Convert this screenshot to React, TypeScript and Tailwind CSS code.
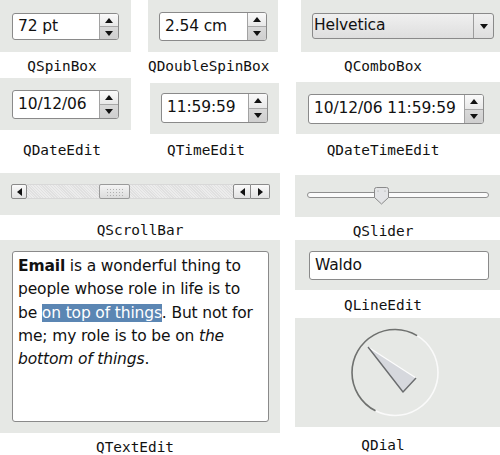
const label = "font-['DejaVu_Sans_Mono',monospace] text-[14.4px] leading-[16px] text-[#111] text-center";
const sans = "font-['DejaVu_Sans',sans-serif] text-[15.5px] tracking-[-0.15px] text-[#111]";
const panel = "bg-[#e6e8e5]";

function SpinButtons() {
  return (
    <div className="flex w-[19px] flex-col border-l border-[#a2a2a2]">
      <div className="flex flex-1 items-center justify-center border-b border-[#a8a8a8] bg-gradient-to-b from-[#fafafa] to-[#e8e8e8]">
        <svg width="8" height="5" viewBox="0 0 8 5">
          <path d="M0 5 L4 0 L8 5 Z" fill="#111" />
        </svg>
      </div>
      <div className="flex flex-1 items-center justify-center bg-gradient-to-b from-[#d9d9d9] to-[#cfcfcf]">
        <svg width="8" height="5" viewBox="0 0 8 5">
          <path d="M0 0 L8 0 L4 5 Z" fill="#111" />
        </svg>
      </div>
    </div>
  );
}

function SpinBox({ text, className }: { text: string; className: string }) {
  return (
    <div className={`flex overflow-hidden rounded-[3px] border border-[#8a8a8a] bg-white ${className}`}>
      <div className={`flex flex-1 items-center pl-[5px] ${sans}`}>{text}</div>
      <SpinButtons />
    </div>
  );
}

function ScrollBar() {
  return (
    <div className="flex h-[15px] w-[259px] items-stretch">
      <div className="flex w-[16px] items-center justify-center rounded-[2px] border border-[#8a8a8a] bg-gradient-to-b from-[#fafafa] to-[#e2e2e2]">
        <svg width="5" height="8" viewBox="0 0 5 8">
          <path d="M5 0 L0 4 L5 8 Z" fill="#111" />
        </svg>
      </div>
      <div className="relative flex-1 border-y border-[#d8d8d8] bg-[repeating-linear-gradient(45deg,#ececec_0px,#ececec_1px,#e0e0e0_1px,#e0e0e0_2px)]">
        <div className="absolute left-[72px] top-[-1px] flex h-[15px] w-[31px] items-center justify-center rounded-[2px] border border-[#9a9a9a] bg-gradient-to-b from-[#f4f4f4] to-[#dcdcdc]">
          <div className="h-[8px] w-[17px] bg-[radial-gradient(#b0b0b0_0.6px,transparent_0.8px)] bg-[length:3px_3px]" />
        </div>
      </div>
      <div className="flex w-[18px] items-center justify-center rounded-l-[2px] border border-[#8a8a8a] bg-gradient-to-b from-[#fafafa] to-[#e2e2e2]">
        <svg width="5" height="8" viewBox="0 0 5 8">
          <path d="M5 0 L0 4 L5 8 Z" fill="#111" />
        </svg>
      </div>
      <div className="flex w-[19px] items-center justify-center rounded-r-[2px] border border-l-0 border-[#8a8a8a] bg-gradient-to-b from-[#fafafa] to-[#e2e2e2]">
        <svg width="5" height="8" viewBox="0 0 5 8">
          <path d="M0 0 L5 4 L0 8 Z" fill="#111" />
        </svg>
      </div>
    </div>
  );
}

function Slider() {
  return (
    <svg width="185" height="20" viewBox="0 0 185 20">
      <rect x="0.5" y="6.5" width="181" height="5" rx="2.5" fill="#fbfbfb" stroke="#8e8e8e" />
      <path
        d="M67.5 3.5 Q67.5 1.5 69.5 1.5 L79.5 1.5 Q81.5 1.5 81.5 3.5 L81.5 11.5 L74.5 18 L67.5 11.5 Z"
        fill="#e3e4e6"
        stroke="#8a8a8a"
      />
      <circle cx="71" cy="5" r="0.6" fill="#999" />
      <circle cx="78" cy="5" r="0.6" fill="#999" />
    </svg>
  );
}

function Dial() {
  return (
    <svg width="205" height="109" viewBox="0 0 205 109">
      {/* light part of the ring: bottom and right */}
      <path d="M80.5 92.8 A43 43 0 0 0 143 54.5 A43 43 0 0 0 122.1 17.6" fill="none" stroke="#fafafa" strokeWidth="1.6" />
      {/* dark part: top and left */}
      <path d="M122.1 17.6 A43 43 0 0 0 57 54.5 A43 43 0 0 0 80.5 92.8" fill="none" stroke="#6f716f" strokeWidth="1.6" />
      <path d="M73 29 L121 60 L108 74 Z" fill="#d6d8dd" />
      <path d="M73 29 L121 60" stroke="#fdfdfd" strokeWidth="1.2" />
      <path d="M73 29 L108 74 L121 60" fill="none" stroke="#6a6c6e" strokeWidth="1.4" strokeLinejoin="round" />
    </svg>
  );
}

export default function App() {
  return (
    <div className="h-[455px] w-[500px] overflow-hidden bg-white">
      {/* row 1 */}
      <div className="flex h-[78px]">
        <div className="flex w-[131px] flex-col">
          <div className={`${panel} h-[52px] pl-[12px] pt-[13px]`}>
            <SpinBox text="72 pt" className="h-[27px] w-[107px]" />
          </div>
          <div className={`${label} mt-[6px] w-[124px]`}>QSpinBox</div>
        </div>
        <div className="ml-[17px] flex w-[130px] flex-col">
          <div className={`${panel} h-[52px] pl-[11px] pt-[12px]`}>
            <SpinBox text="2.54 cm" className="h-[29px] w-[108px]" />
          </div>
          <div className={`${label} mt-[6px] w-[116px]`}>QDoubleSpinBox</div>
        </div>
        <div className="ml-[23px] flex w-[199px] flex-col">
          <div className={`${panel} h-[52px] pl-[11px] pt-[13px]`}>
            <div className="flex h-[26px] w-[182px] overflow-hidden rounded-[3px] border border-[#8a8a8a] bg-gradient-to-b from-[#f0f0f0] to-[#dedede]">
              <div className={`flex flex-1 items-center pl-[1px] ${sans}`}>Helvetica</div>
              <div className="flex w-[20px] items-center justify-center border-l border-[#9c9c9c]">
                <svg width="8" height="5" viewBox="0 0 8 5">
                  <path d="M0 0 L8 0 L4 5 Z" fill="#111" />
                </svg>
              </div>
            </div>
          </div>
          <div className={`${label} mt-[6px] w-[164px]`}>QComboBox</div>
        </div>
      </div>

      {/* row 2 */}
      <div className="flex h-[95px]">
        <div className="flex w-[131px] flex-col">
          <div className={`${panel} h-[52px] pl-[12px] pt-[12px]`}>
            <SpinBox text="10/12/06" className="h-[29px] w-[107px]" />
          </div>
          <div className={`${label} mt-[12px] w-[124px]`}>QDateEdit</div>
        </div>
        <div className="ml-[19px] mt-[5px] flex w-[129px] flex-col">
          <div className={`${panel} h-[51px] pl-[11px] pt-[10px]`}>
            <SpinBox text="11:59:59" className="h-[30px] w-[107px]" />
          </div>
          <div className={`${label} mt-[8px] w-[112px]`}>QTimeEdit</div>
        </div>
        <div className="ml-[17px] mt-[4px] flex w-[204px] flex-col">
          <div className={`${panel} h-[52px] pl-[12px] pt-[12px]`}>
            <SpinBox text="10/12/06 11:59:59" className="h-[30px] w-[176px]" />
          </div>
          <div className={`${label} mt-[8px] w-[174px]`}>QDateTimeEdit</div>
        </div>
      </div>

      {/* row 3 */}
      <div className="flex h-[67px]">
        <div className="flex w-[280px] flex-col">
          <div className={`${panel} h-[42px] pl-[11px] pt-[11px]`}>
            <ScrollBar />
          </div>
          <div className={`${label} mt-[7px] w-[280px]`}>QScrollBar</div>
        </div>
        <div className="ml-[15px] mt-[2px] flex w-[205px] flex-col">
          <div className={`${panel} h-[42px] pl-[12px] pt-[11px]`}>
            <Slider />
          </div>
          <div className={`${label} mt-[6px] w-[176px]`}>QSlider</div>
        </div>
      </div>

      {/* row 4 */}
      <div className="flex">
        <div className="flex w-[280px] flex-col">
          <div className={`${panel} h-[193px] pl-[12px] pt-[11px]`}>
            <div className="h-[171px] w-[257px] rounded-[3px] border border-[#8a8a8a] bg-white pl-[5px] pt-[3px]">
              <p className={`${sans} whitespace-nowrap leading-[23.3px]`}>
                <b>Email</b> is a wonderful thing to
                <br />
                people whose role in life is to
                <br />
                be <span className="bg-[#5b86b3] text-white">on top of things</span>. But not for
                <br />
                me; my role is to be on <i>the</i>
                <br />
                <i>bottom of things</i>.
              </p>
            </div>
          </div>
          <div className={`${label} mt-[6px] w-[270px]`}>QTextEdit</div>
        </div>
        <div className="ml-[15px] flex w-[205px] flex-col">
          <div className={`${panel} h-[50px] pl-[14px] pt-[11px]`}>
            <div className={`flex h-[29px] w-[180px] items-center rounded-[3px] border border-[#8a8a8a] bg-white pl-[5px] ${sans}`}>
              Waldo
            </div>
          </div>
          <div className={`${label} mt-[7px] w-[176px]`}>QLineEdit</div>
          <div className={`${panel} mt-[5px] h-[109px]`}>
            <Dial />
          </div>
          <div className={`${label} mt-[10px] w-[176px]`}>QDial</div>
        </div>
      </div>
    </div>
  );
}
